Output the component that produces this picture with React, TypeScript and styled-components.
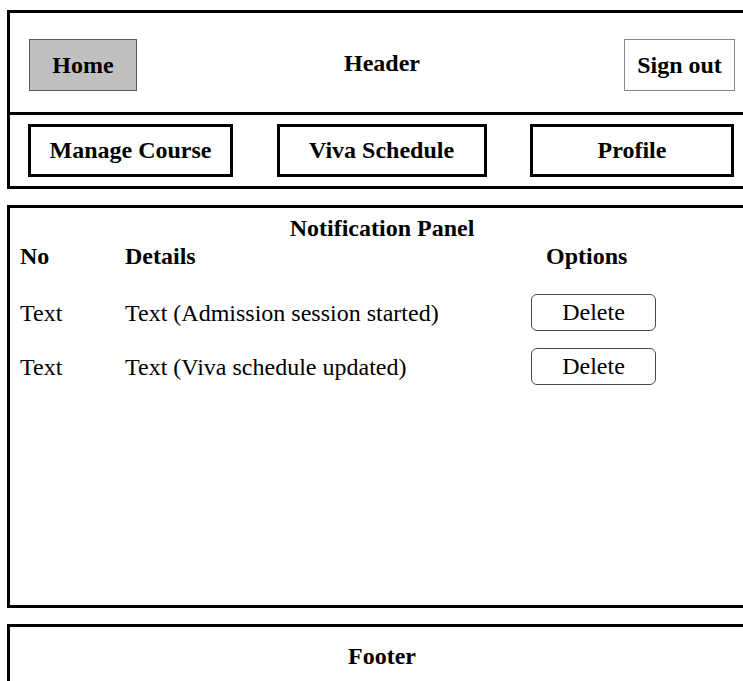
import React from "react";
import styled, { createGlobalStyle } from "styled-components";

const GlobalStyle = createGlobalStyle`
  html, body {
    margin: 0;
    padding: 0;
    overflow: hidden;
    background: #ffffff;
  }
  body {
    font-family: "Liberation Serif", "Times New Roman", serif;
    font-size: 24px;
    line-height: 28px;
    color: #000000;
  }
  * { box-sizing: border-box; }
`;

const Page = styled.div`
  width: 743px;
  height: 681px;
  overflow: hidden;
  padding: 10px 0 0 7px;
  display: flex;
  flex-direction: column;
  gap: 16px;
`;

const Frame = styled.section<{ $height?: number }>`
  flex: none;
  width: 750px;
  border: 3px solid #000;
  background: #fff;
  ${(p) => (p.$height ? `height: ${p.$height}px;` : "")}
`;

const TopBar = styled.div`
  height: 102px;
  border-bottom: 3px solid #000;
  display: grid;
  grid-template-columns: 1fr auto 1fr;
  align-items: center;
  padding: 5px 19px 0 19px;
`;

const TopButton = styled.button<{ $active?: boolean; $align: "start" | "end"; $width: number }>`
  justify-self: ${(p) => p.$align};
  width: ${(p) => p.$width}px;
  height: 52px;
  font-family: inherit;
  font-size: 24px;
  font-weight: 700;
  color: #000;
  background: ${(p) => (p.$active ? "#c0c0c0" : "#ffffff")};
  border: 1px solid ${(p) => (p.$active ? "#5a5a5a" : "#8a8a8a")};
  border-radius: 0;
  padding: 0;
  cursor: pointer;
`;

const Title = styled.div`
  font-weight: 700;
  text-align: center;
  padding-bottom: 4px;
`;

const NavRow = styled.nav`
  height: 71px;
  display: flex;
  align-items: center;
  justify-content: space-between;
  padding: 0 20px 0 18px;
`;

const NavButton = styled.button<{ $width: number }>`
  width: ${(p) => p.$width}px;
  height: 53px;
  border: 3px solid #000;
  background: #fff;
  font-family: inherit;
  font-size: 24px;
  font-weight: 700;
  color: #000;
  padding: 0;
  cursor: pointer;
`;

const PanelBody = styled.div`
  padding: 6px 0 0 10px;
  display: flex;
  flex-direction: column;
`;

const PanelTitle = styled.div`
  font-weight: 700;
  text-align: center;
  margin-left: -10px;
`;

const TableRow = styled.div<{ $head?: boolean; $gap?: number }>`
  display: grid;
  grid-template-columns: 105px 406px 125px;
  align-items: center;
  height: ${(p) => (p.$head ? 28 : 37)}px;
  margin-top: ${(p) => p.$gap ?? 0}px;
  font-weight: ${(p) => (p.$head ? 700 : 400)};
`;

const OptionsHead = styled.div`
  padding-left: 15px;
`;

const DeleteButton = styled.button`
  width: 125px;
  height: 37px;
  border: 1px solid #4a4a4a;
  border-radius: 6px;
  background: #fff;
  font-family: inherit;
  font-size: 24px;
  font-weight: 400;
  color: #000;
  padding: 0;
  cursor: pointer;
`;

const FooterBody = styled.div`
  padding-top: 15px;
  text-align: center;
  font-weight: 700;
`;

const notifications = [
  { no: "Text", details: "Text (Admission session started)", gap: 24 },
  { no: "Text", details: "Text (Viva schedule updated)", gap: 17 },
];

export default function App() {
  return (
    <>
      <GlobalStyle />
      <Page>
        <Frame>
          <TopBar>
            <TopButton $active $align="start" $width={108}>Home</TopButton>
            <Title>Header</Title>
            <TopButton $align="end" $width={111}>Sign out</TopButton>
          </TopBar>
          <NavRow>
            <NavButton $width={205}>Manage Course</NavButton>
            <NavButton $width={210}>Viva Schedule</NavButton>
            <NavButton $width={204}>Profile</NavButton>
          </NavRow>
        </Frame>

        <Frame $height={403}>
          <PanelBody>
            <PanelTitle>Notification Panel</PanelTitle>
            <TableRow $head>
              <div>No</div>
              <div>Details</div>
              <OptionsHead>Options</OptionsHead>
            </TableRow>
            {notifications.map((n, i) => (
              <TableRow key={i} $gap={n.gap}>
                <div>{n.no}</div>
                <div>{n.details}</div>
                <DeleteButton>Delete</DeleteButton>
              </TableRow>
            ))}
          </PanelBody>
        </Frame>

        <Frame $height={100}>
          <FooterBody>Footer</FooterBody>
        </Frame>
      </Page>
    </>
  );
}
